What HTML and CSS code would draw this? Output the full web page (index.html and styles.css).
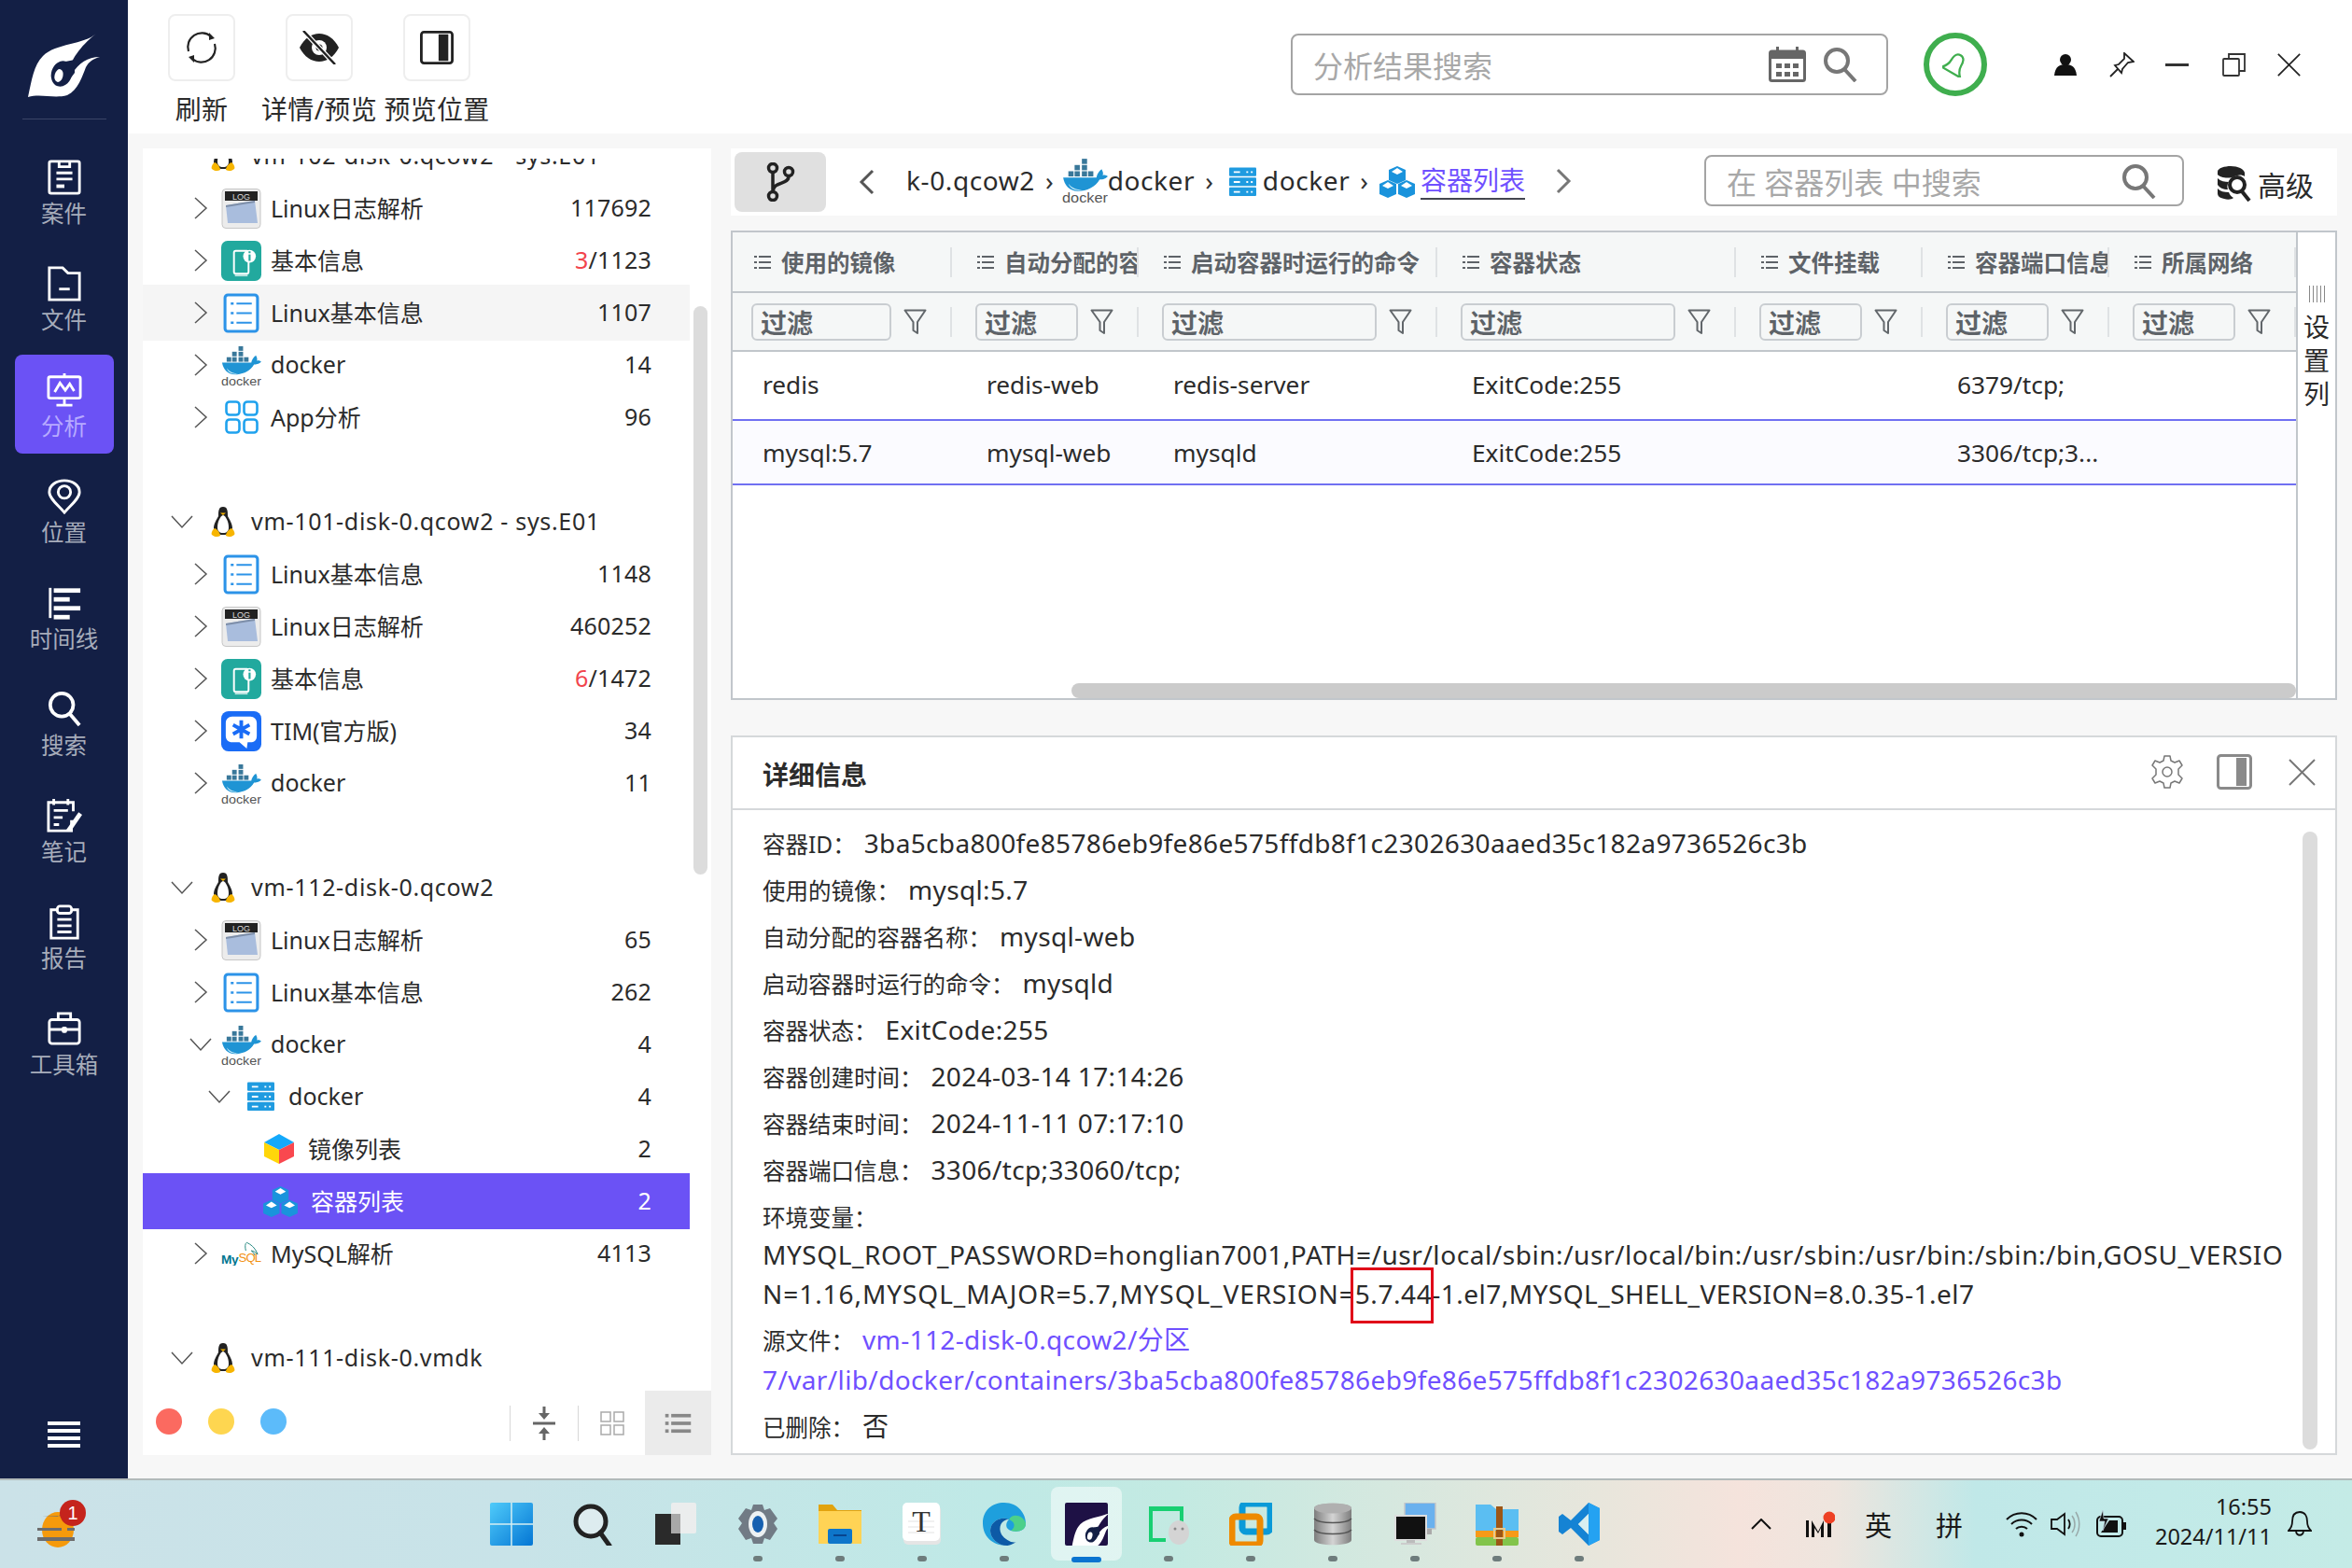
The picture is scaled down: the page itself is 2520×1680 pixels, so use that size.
FILE: index.html
```html
<!DOCTYPE html>
<html lang="zh-CN">
<head>
<meta charset="utf-8">
<title>容器列表</title>
<link rel="stylesheet" href="styles.css">
</head>
<body>
<svg class="defs" xmlns="http://www.w3.org/2000/svg">
  <symbol id="logo" viewBox="0 0 77 68">
    <path fill="#fff" d="M73 0C60 12 30 10 16 24C6 34 4 50 0 68C14 64 28 70 42 66C54 60 58 46 62 36C65 30 70 27 77 25C64 25 54 32 48 42L44 40C46 26 60 10 73 0Z"/>
    <ellipse fill="#131f45" cx="36" cy="43" rx="11" ry="14" transform="rotate(18 36 43)"/>
    <path fill="#131f45" d="M40 30L50 28L50 42L44 50Z"/>
    <ellipse fill="#fff" cx="33" cy="45" rx="4.500" ry="7" transform="rotate(14 33 45)"/>
  </symbol>
  <symbol id="chev-r" viewBox="0 0 16 24"><path d="M2 1L14 12L2 23" fill="none" stroke="#555" stroke-width="1.5"/></symbol>
  <symbol id="chev-d" viewBox="0 0 24 16"><path d="M1 2L12 14L23 2" fill="none" stroke="#555" stroke-width="1.5"/></symbol>
  <symbol id="log" viewBox="0 0 43 43">
    <rect x="1" y="0.5" width="41" height="42" rx="4" fill="#ececec" stroke="#c6c6c6"/>
    <rect x="4" y="3" width="35" height="10" fill="#222"/>
    <text x="21.5" y="11.6" font-size="9" fill="#ddd" text-anchor="middle" font-family="Liberation Sans">LOG</text>
    <path d="M5 18L36 13L39 37H7Z" fill="#a9bddd"/>
    <path d="M5 18L36 13V15L5 20Z" fill="#7d8ea8"/>
  </symbol>
  <symbol id="info" viewBox="0 0 44 44">
    <rect width="44" height="44" rx="7" fill="#22a99e"/>
    <rect x="14" y="11" width="16" height="25" rx="2" fill="none" stroke="#fff" stroke-width="2"/>
    <rect x="15" y="37" width="14" height="2" fill="#bfe6e2"/>
    <circle cx="31" cy="17" r="7" fill="#fff"/>
    <rect x="30" y="15" width="2.2" height="7" fill="#22a99e"/><rect x="30" y="11.5" width="2.2" height="2" fill="#22a99e"/>
  </symbol>
  <symbol id="listdoc" viewBox="0 0 38 42">
    <rect x="2" y="2" width="34" height="38" rx="3" fill="#fff" stroke="#2c93e8" stroke-width="3"/>
    <path d="M14 11H30M14 21H30M14 31H30" stroke="#2c93e8" stroke-width="2"/>
    <path d="M8 11H11M8 21H11M8 31H11" stroke="#2c93e8" stroke-width="2.4"/>
  </symbol>
  <symbol id="apps" viewBox="0 0 36 36">
    <g fill="none" stroke="#1fa2ee" stroke-width="2.6">
      <rect x="1.5" y="1.5" width="14" height="14" rx="3.5"/><rect x="20.5" y="1.5" width="14" height="14" rx="3.5"/>
      <rect x="1.5" y="20.5" width="14" height="14" rx="3.5"/><rect x="20.5" y="20.5" width="14" height="14" rx="3.5"/>
    </g>
  </symbol>
  <symbol id="docker" viewBox="0 0 44 44">
    <g fill="#39789a"><rect x="19" y="1" width="5" height="5"/><rect x="12" y="7" width="5" height="5"/><rect x="19" y="7" width="5" height="5"/><rect x="12" y="13" width="5" height="5"/><rect x="6" y="13" width="5" height="5"/><rect x="19" y="13" width="5" height="5"/><rect x="25" y="13" width="5" height="5"/></g>
    <path fill="#1f94d4" d="M1 19H33C34 14 37 12 38 11C39 13 40 15 39 17C41 16 43 17 44 18C41 21 38 21 36 21C32 28 24 32 15 32C7 32 2 26 1 19Z"/>
    <path fill="#bfe7f6" d="M6 25C9 29 14 31 19 31C14 32 8 31 6 25Z"/>
    <text x="22" y="43.5" font-size="12.5" fill="#555" text-anchor="middle" font-family="Liberation Sans" textLength="44" lengthAdjust="spacingAndGlyphs">docker</text>
  </symbol>
  <symbol id="tim" viewBox="0 0 44 44">
    <rect width="44" height="44" rx="8" fill="#1a6cf6"/>
    <path fill="#fff" d="M12 6H32C36 6 39 9 39 13V27C39 32 36 34 32 34H29L28 41L20 34H12C8 34 5 31 5 27V13C5 9 8 6 12 6Z"/>
    <path stroke="#1a6cf6" stroke-width="4" d="M22 10V30M13 15L31 25M31 15L13 25"/>
  </symbol>
  <symbol id="server" viewBox="0 0 30 32">
    <g fill="#1f9be0"><rect width="30" height="9.5" rx="1"/><rect y="11" width="30" height="9.5" rx="1"/><rect y="22" width="30" height="9.5" rx="1"/></g>
    <path stroke="#fff" stroke-width="2" d="M5 5H12M5 16H12M5 27H12M19 5H21M24 5H26M19 16H21M24 16H26M19 27H21M24 27H26"/>
  </symbol>
  <symbol id="cube" viewBox="0 0 32 32">
    <path fill="#14a9fb" d="M16 0L32 9L16 17L0 9Z"/><path fill="#ffd60a" d="M0 9L16 17V32L0 24Z"/><path fill="#f9484f" d="M32 9L16 17V32L32 24Z"/>
  </symbol>
  <symbol id="boxes" viewBox="0 0 38 34">
    <g fill="#1a93dc"><path d="M19 0L28 4V15L19 19L10 15V4Z"/><path d="M9 15L18 19V30L9 34L0 30V19Z"/><path d="M29 15L38 19V30L29 34L20 30V19Z"/></g>
    <g fill="#fff"><path d="M19 2L25 6L19 9L13 6Z"/><path d="M9 17L15 21L9 24L3 21Z"/><path d="M29 17L35 21L29 24L23 21Z"/></g>
  </symbol>
  <symbol id="mysql" viewBox="0 0 44 26">
    <text x="0" y="24" font-size="14" font-weight="700" fill="#00758f" font-family="Liberation Sans" textLength="19">My</text>
    <text x="19" y="22" font-size="13.500" fill="#f29111" font-family="Liberation Sans" textLength="25">SQL</text>
    <path d="M27 10C26 6 26 2 28 1C32 3 37 6 40 14C38 12 35 10 33 10C36 12 36 14 37 15" fill="none" stroke="#23877f" stroke-width="1"/>
  </symbol>
  <symbol id="tux" viewBox="0 0 28 33">
    <path fill="#222" d="M14 0C9 0 9 5 9 10C7 14 4 18 4 23C4 28 8 30 14 30C20 30 24 28 24 23C24 18 21 14 19 10C19 5 19 0 14 0Z"/>
    <path fill="#fff" d="M14 9C11 10 8 16 8 22C8 26 10 28 14 28C18 28 20 26 20 22C20 16 17 10 14 9Z"/>
    <path fill="#f7b500" d="M11 6.5H17L14 9Z"/>
    <path fill="#f7b500" d="M5 23C2 25 1 29 2 30C4 32 8 33 11 31C11 28 8 24 5 23ZM23 23C26 25 27 29 26 30C24 32 20 33 17 31C17 28 20 24 23 23Z"/>
  </symbol>
  <symbol id="funnel" viewBox="0 0 25 28"><path d="M1.5 1.5H23.5L15 14V26L10.500 23V14Z" fill="none" stroke="#62676b" stroke-width="2" stroke-linejoin="round"/></symbol>
  <symbol id="mag" viewBox="0 0 38 38"><circle cx="15" cy="15" r="12" fill="none" stroke="#777" stroke-width="4"/><path d="M23 24L35 37" stroke="#777" stroke-width="4"/></symbol>
  <symbol id="panel" viewBox="0 0 38 38"><rect x="1.500" y="1.500" width="35" height="35" rx="3" fill="none" stroke="currentColor" stroke-width="3"/><rect x="21" y="4" width="11" height="30" fill="currentColor"/></symbol>
  <symbol id="cross" viewBox="0 0 30 30"><path d="M1 1L29 29M29 1L1 29" fill="none" stroke="currentColor" stroke-width="2"/></symbol>
</svg>

<div class="app">
  <aside class="side">
    <svg class="logo"><use href="#logo"/></svg>
    <div class="logo-line"></div>
    <nav class="nav">
      <div class="nav-item">
        <svg class="nav-ico" viewBox="0 0 40 40"><g fill="none" stroke="#fff" stroke-width="3"><rect x="3" y="2" width="34" height="36" rx="2"/><path d="M14 2V8H26V2M11 15H29M11 22H29"/><path d="M11 30H20" stroke-width="4"/></g></svg>
        <span>案件</span>
      </div>
      <div class="nav-item">
        <svg class="nav-ico" viewBox="0 0 40 40"><g fill="none" stroke="#fff" stroke-width="3"><path d="M3 38V2H18L24 8H37V38Z"/><path d="M14 26H26"/></g></svg>
        <span>文件</span>
      </div>
      <div class="nav-item active">
        <svg class="nav-ico" viewBox="0 0 40 40"><g fill="none" stroke="#fff" stroke-width="3"><rect x="2" y="5" width="36" height="24" rx="2"/><path d="M20 1V5M9 22L15 12L21 20L26 13L31 21"/><path d="M20 29V36M11 37H29" stroke-width="3"/></g></svg>
        <span>分析</span>
      </div>
      <div class="nav-item">
        <svg class="nav-ico" viewBox="0 0 40 40"><g fill="none" stroke="#fff" stroke-width="3"><path d="M20 38C12 29 3 22 3 15C3 7 11 2 20 2C29 2 37 7 37 15C37 22 28 29 20 38Z"/><circle cx="20" cy="15" r="7"/></g></svg>
        <span>位置</span>
      </div>
      <div class="nav-item">
        <svg class="nav-ico" viewBox="0 0 40 40"><g stroke="#fff" fill="none"><path d="M4 3V37" stroke-width="3"/><path d="M8 6H38" stroke-width="5"/><path d="M8 16H26" stroke-width="5"/><path d="M8 26H38" stroke-width="5"/><path d="M8 36H26" stroke-width="5"/></g></svg>
        <span>时间线</span>
      </div>
      <div class="nav-item">
        <svg class="nav-ico" viewBox="0 0 40 40"><g fill="none" stroke="#fff" stroke-width="4"><circle cx="17" cy="15" r="13"/><path d="M26 25L37 38"/></g></svg>
        <span>搜索</span>
      </div>
      <div class="nav-item">
        <svg class="nav-ico" viewBox="0 0 40 40"><g fill="none" stroke="#fff" stroke-width="3"><path d="M28 25V37H2V5H30V15M8 1V8M24 1V8M8 14H24M8 22H18M8 30H14"/></g><path d="M22 36L36 16L40 19L27 38Z" fill="#fff"/></svg>
        <span>笔记</span>
      </div>
      <div class="nav-item">
        <svg class="nav-ico" viewBox="0 0 40 40"><g fill="none" stroke="#fff" stroke-width="3"><path d="M12 6H5V38H35V6H28"/><rect x="12" y="2" width="16" height="8" rx="3"/><path d="M12 17H28M12 24H28M12 31H28"/></g></svg>
        <span>报告</span>
      </div>
      <div class="nav-item">
        <svg class="nav-ico" viewBox="0 0 40 40"><g fill="none" stroke="#fff" stroke-width="3"><rect x="3" y="10" width="34" height="27" rx="3"/><path d="M13 10V3H27V10M3 21H37"/></g><rect x="17" y="18" width="6" height="7" rx="2" fill="#fff"/></svg>
        <span>工具箱</span>
      </div>
    </nav>
    <div class="burger"><i></i><i></i><i></i><i></i></div>
  </aside>

  <main class="main">
    <header class="topbar">
      <div class="tools">
        <div class="tool"><div class="tool-btn"><svg viewBox="0 0 36 36" class="tool-ico"><g fill="none" stroke="#222" stroke-width="2.200"><path d="M4 22A15 15 0 0 1 28 6"/><path d="M32 14A15 15 0 0 1 8 30"/></g><path d="M26 2L32 8L26 10Z M10 34L4 28L10 26Z" fill="#222"/></svg></div><span>刷新</span></div>
        <div class="tool"><div class="tool-btn"><svg viewBox="0 0 44 36" class="tool-ico wide"><path d="M1 18C6 8 14 3 22 3C30 3 38 8 43 18C38 28 30 33 22 33C14 33 6 28 1 18Z" fill="#222"/><circle cx="22" cy="18" r="8" fill="#fff"/><circle cx="22" cy="18" r="3.500" fill="#222"/><path d="M5 0L39 36" stroke="#fff" stroke-width="5"/><path d="M5 0L39 36" stroke="#222" stroke-width="2.500"/></svg></div><span>详情/预览</span></div>
        <div class="tool"><div class="tool-btn"><svg class="tool-ico dark"><use href="#panel"/></svg></div><span>预览位置</span></div>
      </div>
      <div class="top-right">
        <div class="searchbox big">
          <span class="ph">分析结果搜索</span>
          <svg class="cal" viewBox="0 0 40 38"><rect x="1.500" y="5" width="37" height="31.500" rx="2" fill="#fff" stroke="#666" stroke-width="3"/><rect x="1.500" y="5" width="37" height="8" fill="#666"/><rect x="8" y="0" width="3" height="6" fill="#666"/><rect x="29" y="0" width="3" height="6" fill="#666"/><g fill="#666"><rect x="8" y="18" width="6" height="5"/><rect x="17" y="18" width="6" height="5"/><rect x="26" y="18" width="6" height="5"/><rect x="8" y="27" width="6" height="5"/><rect x="17" y="27" width="6" height="5"/><rect x="26" y="27" width="6" height="5"/></g></svg>
          <svg class="mag"><use href="#mag"/></svg>
        </div>
        <div class="alert"><svg viewBox="0 0 32 32"><path transform="rotate(30 16 16)" d="M16 3C10 3 9 9 9 14C9 20 7 23 3 27H29C25 23 23 20 23 14C23 9 22 3 16 3Z" fill="none" stroke="#3fae4e" stroke-width="2.600" stroke-linejoin="round"/></svg></div>
        <svg class="win-ico u" viewBox="0 0 24 24"><circle cx="12" cy="7" r="6" fill="#111"/><path d="M0 24C1 14 6 12 12 12C18 12 23 14 24 24Z" fill="#111"/></svg>
        <svg class="win-ico pin" viewBox="0 0 27 27"><path d="M16 1L26 10L20 11L14 18L13 22L6 14L10 13L16 7Z" fill="#fff" stroke="#222" stroke-width="1.800"/><path d="M9 18L1 26" stroke="#222" stroke-width="1.800"/></svg>
        <div class="win-min"></div>
        <svg class="win-ico mx" viewBox="0 0 25 25"><rect x="1" y="6" width="17" height="18" rx="1" fill="#fff" stroke="#333" stroke-width="1.800"/><path d="M7 6V1H24V19H18" fill="none" stroke="#333" stroke-width="1.800"/></svg>
        <svg class="win-ico x"><use href="#cross"/></svg>
      </div>
    </header>

    <div class="content">
      <section class="tree-panel">
        <div class="tree">
          <div class="row head first"><svg class="chd"><use href="#chev-d"/></svg><svg class="tux"><use href="#tux"/></svg><span class="lab">vm-102-disk-0.qcow2 - sys.E01</span></div>
          <div class="row l1"><svg class="chr"><use href="#chev-r"/></svg><svg class="ico"><use href="#log"/></svg><span class="lab">Linux日志解析</span><span class="cnt">117692</span></div>
          <div class="row l1"><svg class="chr"><use href="#chev-r"/></svg><svg class="ico"><use href="#info"/></svg><span class="lab">基本信息</span><span class="cnt"><b>3</b>/1123</span></div>
          <div class="row l1 hover"><svg class="chr"><use href="#chev-r"/></svg><svg class="ico"><use href="#listdoc"/></svg><span class="lab">Linux基本信息</span><span class="cnt">1107</span></div>
          <div class="row l1"><svg class="chr"><use href="#chev-r"/></svg><svg class="ico"><use href="#docker"/></svg><span class="lab">docker</span><span class="cnt">14</span></div>
          <div class="row l1"><svg class="chr"><use href="#chev-r"/></svg><svg class="ico sm"><use href="#apps"/></svg><span class="lab">App分析</span><span class="cnt">96</span></div>
          <div class="gap"></div>
          <div class="row head"><svg class="chd"><use href="#chev-d"/></svg><svg class="tux"><use href="#tux"/></svg><span class="lab">vm-101-disk-0.qcow2 - sys.E01</span></div>
          <div class="row l1"><svg class="chr"><use href="#chev-r"/></svg><svg class="ico"><use href="#listdoc"/></svg><span class="lab">Linux基本信息</span><span class="cnt">1148</span></div>
          <div class="row l1"><svg class="chr"><use href="#chev-r"/></svg><svg class="ico"><use href="#log"/></svg><span class="lab">Linux日志解析</span><span class="cnt">460252</span></div>
          <div class="row l1"><svg class="chr"><use href="#chev-r"/></svg><svg class="ico"><use href="#info"/></svg><span class="lab">基本信息</span><span class="cnt"><b>6</b>/1472</span></div>
          <div class="row l1"><svg class="chr"><use href="#chev-r"/></svg><svg class="ico"><use href="#tim"/></svg><span class="lab">TIM(官方版)</span><span class="cnt">34</span></div>
          <div class="row l1"><svg class="chr"><use href="#chev-r"/></svg><svg class="ico"><use href="#docker"/></svg><span class="lab">docker</span><span class="cnt">11</span></div>
          <div class="gap"></div>
          <div class="row head"><svg class="chd"><use href="#chev-d"/></svg><svg class="tux"><use href="#tux"/></svg><span class="lab">vm-112-disk-0.qcow2</span></div>
          <div class="row l1"><svg class="chr"><use href="#chev-r"/></svg><svg class="ico"><use href="#log"/></svg><span class="lab">Linux日志解析</span><span class="cnt">65</span></div>
          <div class="row l1"><svg class="chr"><use href="#chev-r"/></svg><svg class="ico"><use href="#listdoc"/></svg><span class="lab">Linux基本信息</span><span class="cnt">262</span></div>
          <div class="row l2"><svg class="chd"><use href="#chev-d"/></svg><svg class="ico"><use href="#docker"/></svg><span class="lab">docker</span><span class="cnt">4</span></div>
          <div class="row l3"><svg class="chd"><use href="#chev-d"/></svg><svg class="srv"><use href="#server"/></svg><span class="lab">docker</span><span class="cnt">4</span></div>
          <div class="row l4"><svg class="cub"><use href="#cube"/></svg><span class="lab">镜像列表</span><span class="cnt">2</span></div>
          <div class="row l4 sel"><svg class="box"><use href="#boxes"/></svg><span class="lab">容器列表</span><span class="cnt">2</span></div>
          <div class="row l1"><svg class="chr"><use href="#chev-r"/></svg><svg class="ico my"><use href="#mysql"/></svg><span class="lab">MySQL解析</span><span class="cnt">4113</span></div>
          <div class="gap"></div>
          <div class="row head"><svg class="chd"><use href="#chev-d"/></svg><svg class="tux"><use href="#tux"/></svg><span class="lab">vm-111-disk-0.vmdk</span></div>
        </div>
        <div class="tree-sb"></div>
        <div class="tree-foot">
          <i class="dot red"></i><i class="dot yel"></i><i class="dot blu"></i>
          <div class="foot-tabs">
            <div class="fdiv"></div>
            <svg class="ft collapse" viewBox="0 0 28 36"><path d="M14 0V10M14 26V36M2 18H26" stroke="#666" stroke-width="3"/><path d="M8 7H20L14 14ZM8 29H20L14 22Z" fill="#666"/></svg>
            <div class="fdiv"></div>
            <svg class="ft gridic" viewBox="0 0 26 26"><g fill="none" stroke="#aaa" stroke-width="1.500"><rect x="1" y="1" width="10" height="10"/><rect x="15" y="1" width="10" height="10"/><rect x="1" y="15" width="10" height="10"/><rect x="15" y="15" width="10" height="10"/></g></svg>
            <div class="ftab"><svg class="ft listic" viewBox="0 0 30 24"><g fill="#888"><rect y="1" width="4" height="4"/><rect y="10" width="4" height="4"/><rect y="19" width="4" height="4"/><rect x="7" y="1" width="23" height="4"/><rect x="7" y="10" width="23" height="4"/><rect x="7" y="19" width="23" height="4"/></g></svg></div>
          </div>
        </div>
      </section>

      <section class="right">
        <div class="crumbs">
          <div class="branch"><svg viewBox="0 0 30 42" class="branch-ico"><g fill="none" stroke="#222" stroke-width="3.500"><circle cx="7" cy="6" r="4.500"/><circle cx="7" cy="36" r="4.500"/><circle cx="24" cy="10" r="4.500"/><path d="M7 11V31M24 15C24 24 8 20 7 31"/></g></svg></div>
          <svg class="back" viewBox="0 0 18 28"><path d="M15 2L3 14L15 26" fill="none" stroke="#555" stroke-width="3"/></svg>
          <span class="cr first-cr">k-0.qcow2</span><span class="sep">›</span>
          <svg class="cr-dock"><use href="#docker"/></svg><span class="cr">docker</span><span class="sep">›</span>
          <svg class="cr-srv"><use href="#server"/></svg><span class="cr">docker</span><span class="sep">›</span>
          <svg class="cr-box"><use href="#boxes"/></svg><span class="cr cur">容器列表</span>
          <svg class="fwd" viewBox="0 0 18 28"><path d="M3 2L15 14L3 26" fill="none" stroke="#777" stroke-width="3"/></svg>
          <div class="searchbox small">
            <span class="ph">在 容器列表 中搜索</span>
            <svg class="mag"><use href="#mag"/></svg>
          </div>
          <svg class="adv-ico" viewBox="0 0 38 38"><g fill="#222"><path d="M2 6C2 2 10 0 16 0C24 0 30 3 31 7V11C28 9 24 9 20 11C14 14 4 12 2 9Z"/><path d="M2 13C5 16 10 17 14 17C12 20 12 23 13 25C8 25 4 23 2 20Z"/><path d="M2 24C5 27 9 28 14 28C15 31 17 33 19 34C17 36 12 36 9 35C4 34 2 32 2 29Z"/></g><circle cx="23" cy="20" r="8" fill="none" stroke="#222" stroke-width="4"/><path d="M28 27L36 37" stroke="#222" stroke-width="4"/></svg>
          <span class="adv">高级</span>
        </div>

        <div class="table">
          <div class="t-main">
            <div class="cols thead">
              <div class="th c-first"><svg class="lines" viewBox="0 0 18 18"><path d="M5 3H18M5 9H18M5 15H18" stroke="#5e6368" stroke-width="2"/><path d="M0 3H3M0 9H3M0 15H3" stroke="#5e6368" stroke-width="2"/></svg><span>使用的镜像</span><i></i></div>
              <div class="th"><svg class="lines" viewBox="0 0 18 18"><path d="M5 3H18M5 9H18M5 15H18" stroke="#5e6368" stroke-width="2"/><path d="M0 3H3M0 9H3M0 15H3" stroke="#5e6368" stroke-width="2"/></svg><span>自动分配的容器名称</span><i></i></div>
              <div class="th"><svg class="lines" viewBox="0 0 18 18"><path d="M5 3H18M5 9H18M5 15H18" stroke="#5e6368" stroke-width="2"/><path d="M0 3H3M0 9H3M0 15H3" stroke="#5e6368" stroke-width="2"/></svg><span>启动容器时运行的命令</span><i></i></div>
              <div class="th"><svg class="lines" viewBox="0 0 18 18"><path d="M5 3H18M5 9H18M5 15H18" stroke="#5e6368" stroke-width="2"/><path d="M0 3H3M0 9H3M0 15H3" stroke="#5e6368" stroke-width="2"/></svg><span>容器状态</span><i></i></div>
              <div class="th"><svg class="lines" viewBox="0 0 18 18"><path d="M5 3H18M5 9H18M5 15H18" stroke="#5e6368" stroke-width="2"/><path d="M0 3H3M0 9H3M0 15H3" stroke="#5e6368" stroke-width="2"/></svg><span>文件挂载</span><i></i></div>
              <div class="th"><svg class="lines" viewBox="0 0 18 18"><path d="M5 3H18M5 9H18M5 15H18" stroke="#5e6368" stroke-width="2"/><path d="M0 3H3M0 9H3M0 15H3" stroke="#5e6368" stroke-width="2"/></svg><span>容器端口信息</span><i></i></div>
              <div class="th"><svg class="lines" viewBox="0 0 18 18"><path d="M5 3H18M5 9H18M5 15H18" stroke="#5e6368" stroke-width="2"/><path d="M0 3H3M0 9H3M0 15H3" stroke="#5e6368" stroke-width="2"/></svg><span>所属网络</span><i></i></div>
            </div>
            <div class="cols tfilter">
              <div class="tf c-first"><div class="finput">过滤</div><svg class="fun"><use href="#funnel"/></svg><i></i></div>
              <div class="tf"><div class="finput">过滤</div><svg class="fun"><use href="#funnel"/></svg><i></i></div>
              <div class="tf"><div class="finput">过滤</div><svg class="fun"><use href="#funnel"/></svg><i></i></div>
              <div class="tf"><div class="finput">过滤</div><svg class="fun"><use href="#funnel"/></svg><i></i></div>
              <div class="tf"><div class="finput">过滤</div><svg class="fun"><use href="#funnel"/></svg><i></i></div>
              <div class="tf"><div class="finput">过滤</div><svg class="fun"><use href="#funnel"/></svg><i></i></div>
              <div class="tf"><div class="finput">过滤</div><svg class="fun"><use href="#funnel"/></svg><i></i></div>
            </div>
            <div class="cols tr r1">
              <div class="td c-first">redis</div><div class="td">redis-web</div><div class="td">redis-server</div><div class="td">ExitCode:255</div><div class="td"></div><div class="td">6379/tcp;</div><div class="td"></div>
            </div>
            <div class="cols tr r2">
              <div class="td c-first">mysql:5.7</div><div class="td">mysql-web</div><div class="td">mysqld</div><div class="td">ExitCode:255</div><div class="td"></div><div class="td">3306/tcp;3...</div><div class="td"></div>
            </div>
            <div class="hbar"></div>
          </div>
          <div class="t-set">
            <div class="grip"><i></i><i></i><i></i><i></i><i></i></div>
            <span>设</span><span>置</span><span>列</span>
          </div>
        </div>

        <div class="detail">
          <div class="d-head">
            <span class="d-title">详细信息</span>
            <svg class="d-gear" viewBox="0 0 36 36"><g fill="none" stroke="#777" stroke-width="1.500"><circle cx="18" cy="18" r="5"/><path d="M15 1H21L22 6L26 8L31 6L34 11L30 15V21L34 25L31 30L26 28L22 30L21 35H15L14 30L10 28L5 30L2 25L6 21V15L2 11L5 6L10 8L14 6Z" stroke-linejoin="round"/></g></svg>
            <svg class="d-panel"><use href="#panel"/></svg>
            <svg class="d-x"><use href="#cross"/></svg>
          </div>
          <div class="d-body">
            <p><em>容器ID：</em>3ba5cba800fe85786eb9fe86e575ffdb8f1c2302630aaed35c182a9736526c3b</p>
            <p><em>使用的镜像：</em>mysql:5.7</p>
            <p><em>自动分配的容器名称：</em>mysql-web</p>
            <p><em>启动容器时运行的命令：</em>mysqld</p>
            <p><em>容器状态：</em>ExitCode:255</p>
            <p><em>容器创建时间：</em>2024-03-14 17:14:26</p>
            <p><em>容器结束时间：</em>2024-11-11 07:17:10</p>
            <p><em>容器端口信息：</em>3306/tcp;33060/tcp;</p>
            <p><em>环境变量：</em></p>
            <div class="env">MYSQL_ROOT_PASSWORD=honglian7001,PATH=/usr/local/sbin:/usr/local/bin:/usr/sbin:/usr/bin:/sbin:/bin,GOSU_VERSIO<br><span class="env-lead">N=1.16,MYSQL_MAJOR=5.7,MYSQL_VERSION=</span><span class="mark">5.7.44</span><span class="env-tail">-1.el7,MYSQL_SHELL_VERSION=8.0.35-1.el7</span></div>
            <div class="src"><em>源文件：</em><a>vm-112-disk-0.qcow2/分区<br>7/var/lib/docker/containers/3ba5cba800fe85786eb9fe86e575ffdb8f1c2302630aaed35c182a9736526c3b</a></div>
            <p class="del"><em>已删除：</em>否</p>
          </div>
          <div class="d-sb"></div>
        </div>
      </section>
    </div>
  </main>

  <footer class="taskbar">
    <div class="tb-left"><svg viewBox="0 0 52 52" class="tb-notify"><ellipse cx="22" cy="32" rx="17" ry="19" fill="#f59a0c"/><path d="M5 18H22L30 11H40V17H28ZM0 30H26V33H0ZM32 30H40V33H32ZM0 40H40V44H0Z" fill="#6d6d6d"/><circle cx="38" cy="14" r="14" fill="#c5241c"/><text x="38" y="21" font-size="20" text-anchor="middle" fill="#fff" font-family="Liberation Sans">1</text></svg></div>
    <div class="tb-center">
      <div class="tb-i"><svg viewBox="0 0 46 46"><defs><linearGradient id="wg" x1="0" y1="0" x2="1" y2="1"><stop offset="0" stop-color="#4fcbfa"/><stop offset="1" stop-color="#0476d4"/></linearGradient></defs><rect width="46" height="46" rx="2" fill="url(#wg)"/><path d="M23 0V46M0 23H46" stroke="#d5eef2" stroke-width="1.500"/></svg></div>
      <div class="tb-i"><svg viewBox="0 0 46 46"><circle cx="20" cy="20" r="16" fill="#ddecef" stroke="#222" stroke-width="5"/><path d="M30 32L40 46" stroke="#222" stroke-width="5" stroke-linecap="round"/></svg></div>
      <div class="tb-i"><svg viewBox="0 0 46 46"><rect x="1" y="12" width="27" height="33" fill="#2a2a2a"/><rect x="18" y="0" width="27" height="33" rx="2" fill="#eee" fill-opacity=".92"/><rect x="18" y="12" width="10" height="21" fill="#a8a8a8"/></svg></div>
      <div class="tb-i dotted"><svg viewBox="0 0 46 46"><path d="M23 2L28 2L30 8L36 6L44 17L40 22L44 28L36 40L30 38L28 44H18L16 38L10 40L2 28L6 22L2 17L10 6L16 8L18 2Z" fill="#717b85"/><ellipse cx="23" cy="23" rx="10" ry="14" fill="#ecf1f3"/><ellipse cx="23" cy="23" rx="6" ry="9" fill="#1660b0"/></svg></div>
      <div class="tb-i dotted"><svg viewBox="0 0 46 46"><path d="M0 2H15L20 8H46V44H0Z" fill="#e2a30e"/><rect y="9" width="46" height="35" fill="#ffd355"/><rect x="10" y="28" width="26" height="16" rx="2" fill="#0e76ca"/><rect x="16" y="34" width="14" height="2" fill="#08458f"/></svg></div>
      <div class="tb-i dotted"><svg viewBox="0 0 46 46"><rect x="3" y="3" width="40" height="42" rx="5" fill="#e5e5e5"/><rect x="2" y="0" width="40" height="41" rx="5" fill="#fff"/><path d="M8 20H36M8 26H36M8 32H36" stroke="#e2e2e2"/><text x="22" y="31" font-size="32" text-anchor="middle" fill="#333" font-family="Liberation Serif">T</text></svg></div>
      <div class="tb-i dotted"><svg viewBox="0 0 46 46"><path d="M23 0C38 0 46 12 46 22C46 30 38 32 30 30C24 28 24 22 28 18C20 14 8 20 8 30C8 38 16 46 26 46C10 46 0 36 0 22C0 8 10 0 23 0Z" fill="#1e9fdd"/><path d="M28 18C32 10 44 14 46 22C46 30 38 32 30 30C36 26 34 20 28 18Z" fill="#4cd08a"/><path d="M8 30C8 20 20 14 28 18C20 18 16 26 20 34C24 40 32 44 36 42C30 46 26 46 26 46C16 46 8 38 8 30Z" fill="#0d5aa6"/></svg></div>
      <div class="tb-i dotted tb-active"><svg viewBox="0 0 46 46"><rect width="46" height="46" rx="2" fill="#1e1145"/><svg x="7" y="6" width="33" height="34"><use href="#logo"/></svg></svg></div>
      <div class="tb-i dotted"><svg viewBox="0 0 46 46"><path d="M2 4H39V22H35V9H6V38H20V42H2Z" fill="#18cf72"/><ellipse cx="34" cy="32" rx="11" ry="13" fill="#d4d4d4"/><circle cx="30" cy="28" r="1.500" fill="#888"/><circle cx="38" cy="28" r="1.500" fill="#888"/></svg></div>
      <div class="tb-i dotted"><svg viewBox="0 0 46 46"><rect x="14" y="1" width="30" height="30" rx="4" fill="none" stroke="#0a9ad8" stroke-width="7"/><rect x="3" y="15" width="30" height="30" rx="4" fill="none" stroke="#ee8a00" stroke-width="7"/></svg></div>
      <div class="tb-i dotted"><svg viewBox="0 0 46 46"><defs><linearGradient id="dbg" x1="0" x2="1" y1="0" y2="0"><stop offset="0" stop-color="#7d7d7d"/><stop offset=".5" stop-color="#d4d4d4"/><stop offset="1" stop-color="#7d7d7d"/></linearGradient></defs><path d="M3 6C3-1 43-1 43 6V40C43 47 3 47 3 40Z" fill="url(#dbg)"/><ellipse cx="23" cy="6" rx="20" ry="5.500" fill="#b0b0b0"/><path d="M3 17C8 23 38 23 43 17M3 29C8 35 38 35 43 29" fill="none" stroke="#555" stroke-width="1.500"/></svg></div>
      <div class="tb-i dotted"><svg viewBox="0 0 46 46"><rect x="12" y="0" width="33" height="28" fill="#6ab1ee" stroke="#c7c7c7" stroke-width="1.500"/><rect x="35" y="28" width="6" height="6" fill="#aaa"/><rect x="2" y="14" width="33" height="26" fill="#111" stroke="#ddd" stroke-width="2"/><rect x="14" y="40" width="9" height="4" fill="#bbb"/><rect x="8" y="43" width="22" height="2" fill="#ccc"/></svg></div>
      <div class="tb-i dotted"><svg viewBox="0 0 46 46"><path d="M0 2H16L22 7H46V34H0Z" fill="#5bbef2"/><rect y="30" width="46" height="7" fill="#f79a18"/><rect y="37" width="46" height="9" rx="2" fill="#82c44b"/><rect x="22" y="4" width="7" height="42" fill="#9c5616"/><rect x="20" y="28" width="11" height="10" fill="none" stroke="#e7c98d" stroke-width="2"/></svg></div>
      <div class="tb-i dotted"><svg viewBox="0 0 46 46"><path d="M33 0L45 6V40L33 46L14 27L5 34L1 31V15L5 12L14 19ZM33 12L22 23L33 34Z" fill="#1583d4"/><path d="M33 0L45 6V40L33 46Z" fill="#24a2f2"/><path d="M33 12V34L22 23Z" fill="#d8eff0"/></svg></div>
    </div>
    <div class="tray">
      <svg class="t-up" viewBox="0 0 22 12"><path d="M1 11L11 1L21 11" fill="none" stroke="#111" stroke-width="2"/></svg>
      <svg class="t-m" viewBox="0 0 32 28"><path d="M1 10H4V28H1ZM7 10L14 22L20 10V28H17V18L14 24L10 18V28H7ZM24 10H28V28H24Z" fill="#111"/><circle cx="26" cy="7" r="6.500" fill="#ee4024"/></svg>
      <span class="t-ime first-ime">英</span>
      <span class="t-ime">拼</span>
      <svg class="t-wifi" viewBox="0 0 34 28"><g fill="none" stroke="#111" stroke-width="2"><path d="M1 9C10 0 24 0 33 9"/><path d="M6 14C12 8 22 8 28 14"/><path d="M11 19C14 16 20 16 23 19"/></g><circle cx="17" cy="25" r="2.500" fill="#111"/></svg>
      <svg class="t-vol" viewBox="0 0 32 28"><path d="M1 9H7L15 3V25L7 19H1Z" fill="none" stroke="#111" stroke-width="1.800"/><path d="M19 9C21 12 21 16 19 19" fill="none" stroke="#111" stroke-width="1.800"/><path d="M23 5C27 10 27 18 23 23M27 1C32 9 32 19 27 27" fill="none" stroke="#9aa" stroke-width="1.500"/></svg>
      <svg class="t-bat" viewBox="0 0 32 30"><rect x="1" y="7" width="27" height="21" rx="4" fill="none" stroke="#111" stroke-width="2"/><rect x="29" y="13" width="3" height="8" fill="#111"/><path d="M5 24L14 11H23V24Z" fill="#111"/><path d="M7 0L3 12H9L7 22L13 9H8Z" fill="#111" stroke="#cde" stroke-width=".6"/></svg>
      <div class="clock"><span>16:55</span><span>2024/11/11</span></div>
      <svg class="t-bell" viewBox="0 0 26 28"><path d="M13 1C7 1 5 6 5 11C5 16 4 18 1 21H25C22 18 21 16 21 11C21 6 19 1 13 1Z" fill="none" stroke="#111" stroke-width="1.800"/><path d="M9 22C10 27 16 27 17 22" fill="none" stroke="#111" stroke-width="1.800"/></svg>
    </div>
  </footer>
</div>
</body>
</html>
```

FILE: styles.css
```css
* { box-sizing: border-box; }
html, body { margin: 0; padding: 0; }
body { width: 2520px; height: 1680px; overflow: hidden; background: #f7f7f7; font-family: "Noto Sans", "Noto Sans CJK SC", sans-serif; color: #2b2b2b; }
.defs { display: none; }
svg { display: block; flex: none; }

.app { display: grid; grid-template-columns: 137px 1fr; grid-template-rows: 1584px 96px; width: 2520px; height: 1680px; }

/* sidebar */
.side { background: #131f45; display: flex; flex-direction: column; align-items: center; padding-top: 36px; }
.logo { width: 77px; height: 68px; }
.logo-line { width: 90px; height: 1px; background: #3b4668; margin-top: 23px; }
.nav { display: flex; flex-direction: column; align-items: center; margin-top: 24px; }
.nav-item { width: 106px; height: 106px; margin-bottom: 8px; border-radius: 8px; display: flex; flex-direction: column; align-items: center; padding-top: 19px; color: #a6acba; font-size: 24.5px; line-height: 34px; }
.nav-ico { width: 38px; height: 38px; margin-bottom: 3px; }
.nav-item.active { background: #6b52f5; color: #b7aaff; }
.burger { margin-top: auto; margin-bottom: 33px; width: 35px; display: flex; flex-direction: column; gap: 4px; }
.burger i { display: block; height: 4px; background: #fff; }

/* main */
.main { display: flex; flex-direction: column; min-width: 0; }
.topbar { height: 143px; background: #fff; display: flex; align-items: flex-start; padding-right: 55px; }
.tools { display: flex; padding-left: 16px; padding-top: 15px; }
.tool { width: 126px; display: flex; flex-direction: column; align-items: center; font-size: 28px; line-height: 40px; letter-spacing: .3px; white-space: nowrap; color: #2b2b2b; }
.tool-btn { width: 72px; height: 72px; border: 2px solid #eeeeee; border-radius: 8px; margin-bottom: 10px; display: flex; align-items: center; justify-content: center; }
.tool-ico { width: 36px; height: 36px; color: #222; }
.tool-ico.wide { width: 44px; }

.top-right { margin-left: auto; height: 138px; display: flex; align-items: center; }
.searchbox { border: 2px solid #a4a4a4; border-radius: 8px; display: flex; align-items: center; }
.searchbox .ph { color: #a8a8a8; font-size: 32px; white-space: nowrap; }
.searchbox.big { width: 640px; height: 66px; padding: 0 30px 0 22px; }
.searchbox.big .ph { margin-right: auto; }
.cal { width: 40px; height: 38px; margin-right: 18px; }
.mag { width: 38px; height: 38px; }
.alert { width: 68px; height: 68px; margin-left: 38px; border: 6px solid #3fae4e; border-radius: 50%; display: flex; align-items: center; justify-content: center; }
.alert svg { width: 28px; height: 28px; }
.win-ico { display: block; }
.u { width: 24px; height: 24px; margin-left: 72px; }
.pin { width: 27px; height: 27px; margin-left: 35px; }
.win-min { width: 25px; height: 3px; background: #333; margin-left: 33px; }
.mx { width: 25px; height: 25px; margin-left: 36px; }
.x { width: 25px; height: 25px; margin-left: 34px; color: #222; }

/* content */
.content { flex: 1; min-height: 0; display: flex; gap: 21px; padding: 16px 16px 25px 16px; background: #f7f7f7; }

/* tree */
.tree-panel { width: 609px; flex: none; background: #fff; position: relative; display: flex; flex-direction: column; padding-top: 11px; }
.tree { flex: 1; min-height: 0; overflow: hidden; width: 586px; }
.row { height: 56px; display: flex; align-items: center; font-size: 25px; white-space: nowrap; padding-right: 41px; }
.row.first { margin-top: -31px; }
.first .chd { visibility: hidden; }
.gap { height: 56px; }
.lab { color: #2b2b2b; margin-top: -2px; }
.head .lab { letter-spacing: .68px; }
.cnt { margin-left: auto; margin-top: -2px; color: #2b2b2b; letter-spacing: .2px; }
.cnt b { font-weight: 400; color: #f2444c; }
.chr { width: 16px; height: 24px; }
.chd { width: 24px; height: 16px; }
.ico { width: 43px; height: 43px; margin: 0 10px 0 14px; }
.ico.sm { width: 36px; height: 36px; margin: 0 13px 0 18px; }
.ico.my { height: 26px; }
.head .tux { width: 28px; height: 33px; margin: 0 16px 0 18px; }
.head { padding-left: 30px; }
.l1 { padding-left: 54px; }
.l2 { padding-left: 50px; }
.l2 .ico { margin-left: 10px; }
.l3 { padding-left: 70px; }
.srv { width: 29px; height: 32px; margin: 0 15px 0 18px; }
.l4 { padding-left: 130px; }
.cub { width: 32px; height: 32px; margin-right: 15px; }
.box { width: 37px; height: 33px; margin: 0 14px 0 -1px; }
.hover { background: #f5f5f5; height: 60px; margin: -2px 0; }
.sel { background: #6b52f5; height: 60px; margin: -2px 0; }
.sel .lab, .sel .cnt { color: #fff; }
.tree-sb { position: absolute; right: 4px; top: 169px; width: 15px; height: 609px; background: #dcdcdc; border-radius: 8px; }

.tree-foot { height: 69px; flex: none; display: flex; align-items: center; padding-left: 14px; gap: 28px; background: #fff; }
.dot { width: 28px; height: 28px; border-radius: 50%; display: block; margin-top: -3px; }
.red { background: #fb6a60; }
.yel { background: #fed650; }
.blu { background: #5cbbfa; }
.foot-tabs { margin-left: auto; display: flex; align-items: center; height: 69px; }
.fdiv { width: 1px; height: 38px; background: #d8d8d8; }
.ft.collapse { width: 28px; height: 36px; margin: 0 22px; }
.ft.gridic { width: 26px; height: 26px; margin: 0 22px 0 23px; }
.ftab { width: 71px; height: 69px; background: #ebebeb; display: flex; align-items: center; justify-content: center; }
.ft.listic { width: 29px; height: 22px; }

/* right */
.right { flex: 1; min-width: 0; display: flex; flex-direction: column; }
.crumbs { height: 72px; flex: none; background: #fff; display: flex; align-items: center; padding: 0 25px 0 4px; font-size: 28px; white-space: nowrap; }
.branch { width: 98px; height: 64px; background: #e0e0e0; border-radius: 8px; display: flex; align-items: center; justify-content: center; }
.branch-ico { width: 32px; height: 42px; }
.back { width: 18px; height: 28px; margin: 0 33px 0 35px; }
.fwd { width: 18px; height: 28px; margin-left: 32px; margin-top: -2px; }
.cr { color: #2b2b2b; letter-spacing: .6px; margin-top: -4px; }
.sep { margin: -4px 11px 0 11px; color: #333; }
.cr-dock { width: 49px; height: 49px; margin-top: -4px; margin-left: -2px; }
.cr-srv { width: 29px; height: 32px; margin-left: 6px; margin-right: 7px; }
.cr-box { width: 38px; height: 34px; margin-left: 1px; margin-right: 6px; }
.cur { color: #6f50ff; border-bottom: 2px solid #44464f; line-height: 38px; letter-spacing: 0; margin-top: -2px; }
.searchbox.small { width: 514px; height: 55px; margin-left: auto; padding: 0 27px 0 22px; justify-content: space-between; margin-top: -3px; }
.adv-ico { width: 38px; height: 38px; margin-left: 34px; margin-top: 4px; }
.adv { font-size: 30px; margin-left: 7px; margin-top: 4px; color: #2b2b2b; }

/* table */
.table { height: 503px; flex: none; margin-top: 16px; border: 2px solid #c1c6cb; background: #fff; display: flex; }
.t-main { flex: 1; min-width: 0; position: relative; }
.cols { display: grid; grid-template-columns: 235px 200px 320px 320px 200px 200px 200px; }
.thead { height: 65px; background: #f5f7f7; border-bottom: 2px solid #c1c6cb; }
.th { display: flex; align-items: center; padding-left: 27px; min-width: 0; font-size: 24.5px; font-weight: 700; color: #5e6368; white-space: nowrap; }
.th.c-first { padding-left: 23px; }
.lines { width: 18px; height: 18px; margin-right: 11px; }
.th span { flex: 1; min-width: 0; overflow: hidden; }
.th i, .tf i { display: block; width: 2px; height: 32px; background: #dfe2e4; flex: none; }
.tfilter { height: 63px; background: #f5f7f7; border-bottom: 2px solid #c1c6cb; }
.tf { display: flex; align-items: center; padding-left: 25px; min-width: 0; }
.tf.c-first { padding-left: 20px; }
.finput { flex: 1; min-width: 0; height: 40px; border: 2px solid #c9cdd1; border-radius: 6px; background: #f5f7f7; padding-left: 8px; font-size: 28px; font-weight: 700; line-height: 38px; color: #5e6368; }
.fun { width: 25px; height: 28px; margin: 0 25px 0 13px; }
.tr { font-size: 26.250px; }
.td { padding-left: 37px; white-space: nowrap; overflow: hidden; display: flex; align-items: center; color: #2b2b2b; }
.td.c-first { padding-left: 32px; }
.r1 { height: 72px; padding-bottom: 2px; }
.r2 { height: 71px; border-top: 2px solid #7070f2; border-bottom: 2px solid #7070f2; background: #fbfbff; }
.hbar { position: absolute; left: 363px; right: 0; bottom: 0; height: 16px; background: #cbcbcb; border-radius: 8px; }
.t-set { width: 42px; flex: none; border-left: 2px solid #c1c6cb; display: flex; flex-direction: column; align-items: center; padding-top: 57px; font-size: 28px; line-height: 36px; color: #2b2b2b; }
.grip { display: flex; gap: 3px; height: 18px; margin-bottom: 8px; }
.grip i { display: block; width: 1px; height: 18px; background: #888; }

/* detail */
.detail { flex: 1; min-height: 0; margin-top: 38px; border: 2px solid #d5d8da; background: #fff; position: relative; }
.d-head { height: 78px; border-bottom: 2px solid #d5d8da; display: flex; align-items: center; padding-right: 21px; padding-bottom: 2px; }
.d-title { font-size: 28px; font-weight: 700; margin-left: 32px; margin-right: auto; margin-top: 4px; color: #2b2b2b; }
.d-gear { width: 36px; height: 36px; }
.d-panel { width: 38px; height: 38px; margin-left: 35px; color: #8a8a8a; }
.d-x { width: 29px; height: 29px; margin-left: 39px; color: #777; }
.d-body { padding: 10px 0 0 32px; font-size: 28px; color: #2b2b2b; white-space: nowrap; letter-spacing: .35px; }
.d-body p { margin: 0; line-height: 50px; height: 50px; }
.d-body em { font-style: normal; font-size: 24.5px; margin-right: 9px; color: #2b2b2b; letter-spacing: 0; }
.env { margin-top: -4px; line-height: 41.600px; letter-spacing: .56px; }
.env-lead { letter-spacing: .94px; }
.env-tail { letter-spacing: .48px; }
.mark { position: relative; }
.mark::after { content: ""; position: absolute; left: -5px; right: -2px; top: -9px; bottom: -13px; border: 3px solid #e00018; }
.src { margin-top: 8px; line-height: 41.600px; letter-spacing: .37px; }
.src a { color: #6f50ff; }
.d-body p.del { margin-top: 4px; }
.d-sb { position: absolute; right: 19px; top: 101px; bottom: 4px; width: 16px; background: #dcdcdc; border-radius: 8px; }

/* taskbar */
.taskbar { grid-column: 1 / 3; height: 96px; border-top: 2px solid #b2baba; display: flex; align-items: center; padding: 0 43px 0 40px; background: linear-gradient(90deg, #cbe2e8 0%, #c8e3e8 22%, #bfe9e6 42%, #c3eae2 50%, #e8e6dc 68%, #f5e3dc 74%, #eee5de 78%, #c0e8e8 84%, #c2eae8 92%, #c4ebe6 100%); }
.tb-left { width: 52px; }
.tb-notify { width: 52px; height: 52px; }
.tb-center { display: flex; margin-left: 433px; }
.tb-i { width: 46px; height: 46px; margin-right: 42px; position: relative; }
.tb-i svg { width: 46px; height: 46px; }
.dotted::after { content: ""; position: absolute; left: 50%; margin-left: -5px; bottom: -17px; width: 10px; height: 6px; border-radius: 3px; background: #6e7c7c; }
.tb-active::before { content: ""; position: absolute; left: -15px; top: -17px; width: 76px; height: 79px; border-radius: 8px; background: rgba(255,255,255,.5); }
.tb-active svg { position: relative; }
.tb-active::after { width: 32px; margin-left: -16px; background: #0a74d0; bottom: -18px; }
.tray { margin-left: auto; display: flex; align-items: center; }
.t-up { width: 22px; height: 12px; }
.t-m { width: 32px; height: 28px; margin-left: 36px; }
.t-ime { font-size: 29px; color: #1a1a1a; margin-left: 46px; width: 30px; }
.first-ime { margin-left: 32px; }
.t-wifi { width: 34px; height: 28px; margin-left: 45px; }
.t-vol { width: 32px; height: 28px; margin-left: 14px; }
.t-bat { width: 32px; height: 30px; margin-left: 17px; }
.clock { display: flex; flex-direction: column; align-items: flex-end; margin-left: 31px; margin-top: -6px; font-size: 23.5px; line-height: 32px; color: #1a1a1a; }
.t-bell { width: 26px; height: 28px; margin-left: 17px; }
```
